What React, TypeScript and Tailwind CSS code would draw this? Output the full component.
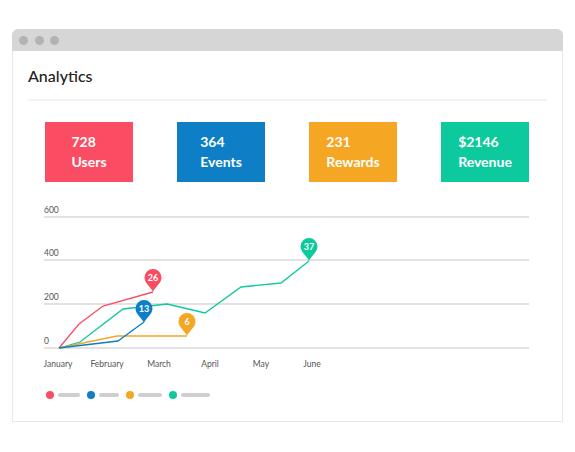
import React from "react";

const cards = [
  { v: "728", l: "Users", c: "bg-[#fa4d64]" },
  { v: "364", l: "Events", c: "bg-[#0e7fc6]" },
  { v: "231", l: "Rewards", c: "bg-[#f5a623]" },
  { v: "$2146", l: "Revenue", c: "bg-[#0cca9e]" },
];

const RED = "#fa4d64";
const BLUE = "#0e7fc6";
const ORANGE = "#f5a623";
const GREEN = "#0cca9e";

function Pin({ x, y, color, label }: { x: number; y: number; color: string; label: string }) {
  const r = 8.5;
  const cy = y - 14.5;
  const d = `M ${x} ${y} C ${x - 1.5} ${cy + 10}, ${x - r} ${cy + 6}, ${x - r} ${cy} A ${r} ${r} 0 1 1 ${x + r} ${cy} C ${x + r} ${cy + 6}, ${x + 1.5} ${cy + 10}, ${x} ${y} Z`;
  return (
    <g>
      <path d={d} fill={color} />
      <text x={x} y={cy + 3.2} textAnchor="middle" fontSize="9" fontWeight="700" fill="#fff" fontFamily="Lato, sans-serif">
        {label}
      </text>
    </g>
  );
}

function Chart() {
  const grid = [
    { y: 217, t: "600" },
    { y: 260, t: "400" },
    { y: 304, t: "200" },
    { y: 348, t: "0" },
  ];
  const months = [
    { x: 58, t: "January" },
    { x: 107, t: "February" },
    { x: 159, t: "March" },
    { x: 210, t: "April" },
    { x: 261, t: "May" },
    { x: 312, t: "June" },
  ];
  const pts = (a: number[][]) => a.map((p) => p.join(",")).join(" ");
  return (
    <svg width="551" height="172" viewBox="0 0 551 172" className="block">
      <g transform="translate(-12,-200)" fontFamily="Lato, sans-serif">
        {grid.map((g) => (
          <g key={g.t}>
            <line x1="44" x2="529" y1={g.y} y2={g.y} stroke="#d9d9d9" strokeWidth="1.3" />
            <text x="44" y={g.y - 4} fontSize="8.5" fill="#555">
              {g.t}
            </text>
          </g>
        ))}
        {months.map((m) => (
          <text key={m.t} x={m.x} y="367" fontSize="8.5" fill="#555" textAnchor="middle">
            {m.t}
          </text>
        ))}
        <polyline
          points={pts([[59, 348], [79, 324], [103, 306], [153, 292]])}
          fill="none"
          stroke={RED}
          strokeWidth="1.3"
        />
        <polyline
          points={pts([[59, 348], [80, 342], [123, 309], [167, 304], [205, 313], [241, 287], [281, 283], [309, 261]])}
          fill="none"
          stroke={GREEN}
          strokeWidth="1.3"
        />
        <polyline
          points={pts([[59, 348], [117, 336], [187, 336]])}
          fill="none"
          stroke={ORANGE}
          strokeWidth="1.3"
        />
        <polyline
          points={pts([[59, 348], [118, 341], [144, 322]])}
          fill="none"
          stroke={BLUE}
          strokeWidth="1.3"
        />
        <Pin x={153} y={292} color={RED} label="26" />
        <Pin x={144} y={323} color={BLUE} label="13" />
        <Pin x={187} y={336} color={ORANGE} label="6" />
        <Pin x={309} y={261} color={GREEN} label="37" />
      </g>
    </svg>
  );
}

export default function App() {
  const legend = [
    { c: "bg-[#fa4d64]", w: "w-[22px]" },
    { c: "bg-[#0e7fc6]", w: "w-[20px]" },
    { c: "bg-[#f5a623]", w: "w-[24px]" },
    { c: "bg-[#0cca9e]", w: "w-[29px]" },
  ];
  return (
    <div className="w-[575px] h-[452px] bg-white pt-[29px] pl-[12px]" style={{ fontFamily: "Lato, 'Noto Sans', sans-serif" }}>
      <div className="w-[551px] h-[393px] flex flex-col">
        <div className="h-[22px] bg-[#d6d6d6] rounded-t-[6px] flex items-center gap-[6.5px] pl-[7px]">
          <div className="w-[9px] h-[9px] rounded-full bg-[#b3b3b3]" />
          <div className="w-[9px] h-[9px] rounded-full bg-[#b3b3b3]" />
          <div className="w-[9px] h-[9px] rounded-full bg-[#b3b3b3]" />
        </div>
        <div className="flex-1 border-x border-b border-[#e8e8e8] flex flex-col">
          <div className="mt-[15px] ml-[15px] text-[16px] leading-[20px] text-[#222] font-medium">Analytics</div>
          <div className="mt-[13px] mx-[15px] h-[2px] bg-[#f1f3f6]" />
          <div className="mt-[21px] ml-[32px] flex gap-[44px]">
            {cards.map((c) => (
              <div key={c.l} className={`w-[88px] h-[60px] ${c.c} flex items-center justify-center`}>
                <div className="text-white font-bold text-[14px] leading-[20px] text-left">
                  <div>{c.v}</div>
                  <div>{c.l}</div>
                </div>
              </div>
            ))}
          </div>
          <div className="mt-[18px] -ml-px">
            <Chart />
          </div>
          <div className="mt-[19px] ml-[33px] flex items-center">
            {legend.map((l, i) => (
              <div key={i} className="flex items-center gap-[4px] mr-[7px]">
                <div className={`w-[8px] h-[8px] rounded-full ${l.c}`} />
                <div className={`h-[4px] ${l.w} rounded-full bg-[#cfcfcf]`} />
              </div>
            ))}
          </div>
        </div>
      </div>
    </div>
  );
}
